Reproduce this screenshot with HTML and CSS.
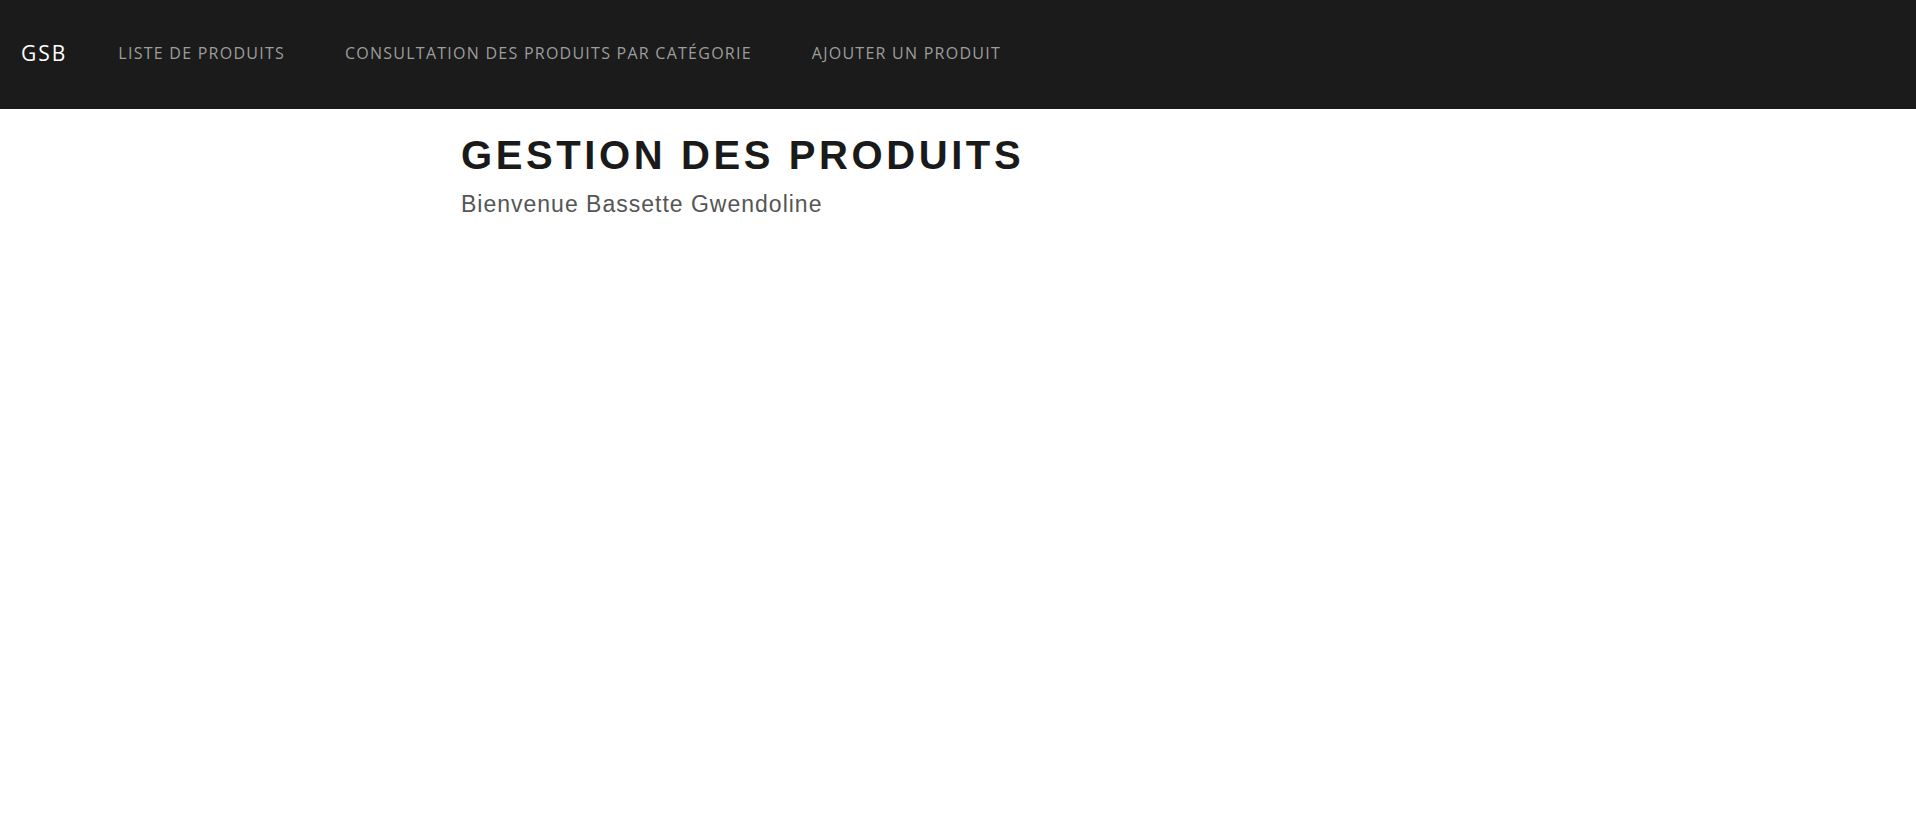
FILE: index.html
```html
<!DOCTYPE html>
<html lang="fr">
<head>
<meta charset="utf-8">
<title>GSB - Gestion des produits</title>
<link rel="stylesheet" href="styles.css">
</head>
<body>
<nav class="navbar">
  <a class="brand" href="#">GSB</a>
  <ul class="nav-links">
    <li><a href="#">Liste de produits</a></li>
    <li><a href="#">Consultation des produits par catégorie</a></li>
    <li><a href="#">Ajouter un produit</a></li>
  </ul>
</nav>
<main class="container">
  <h1 class="title">Gestion des produits</h1>
  <p class="welcome">Bienvenue Bassette Gwendoline</p>
</main>
</body>
</html>
```

FILE: styles.css
```css
* { box-sizing: border-box; }
html, body { margin: 0; padding: 0; background: #fff; }
body { font-family: "Liberation Sans", Arial, sans-serif; }

.navbar {
  height: 109px;
  background: #1b1b1b;
  display: flex;
  align-items: center;
  padding: 0 20px 4px 21px;
  font-family: "Open Sans", "Noto Sans", sans-serif;
}
.brand {
  color: #fff;
  text-decoration: none;
  font-size: 21px;
  letter-spacing: 2px;
}
.nav-links {
  list-style: none;
  margin: 0 0 0 51px;
  padding: 0;
  display: flex;
  gap: 60px;
}
.nav-links a {
  color: #9d9d9d;
  text-decoration: none;
  text-transform: uppercase;
  font-size: 16px;
  letter-spacing: 1.25px;
}

.container {
  width: 994px;
  margin: 0 auto;
  padding-top: 23px;
}
.title {
  margin: 0;
  font-size: 40px;
  line-height: 46px;
  font-weight: bold;
  letter-spacing: 3.6px;
  color: #1a1a1a;
  text-transform: uppercase;
}
.welcome {
  margin: 13px 0 0;
  font-size: 23px;
  line-height: 26px;
  letter-spacing: 1px;
  color: #555;
}
```
